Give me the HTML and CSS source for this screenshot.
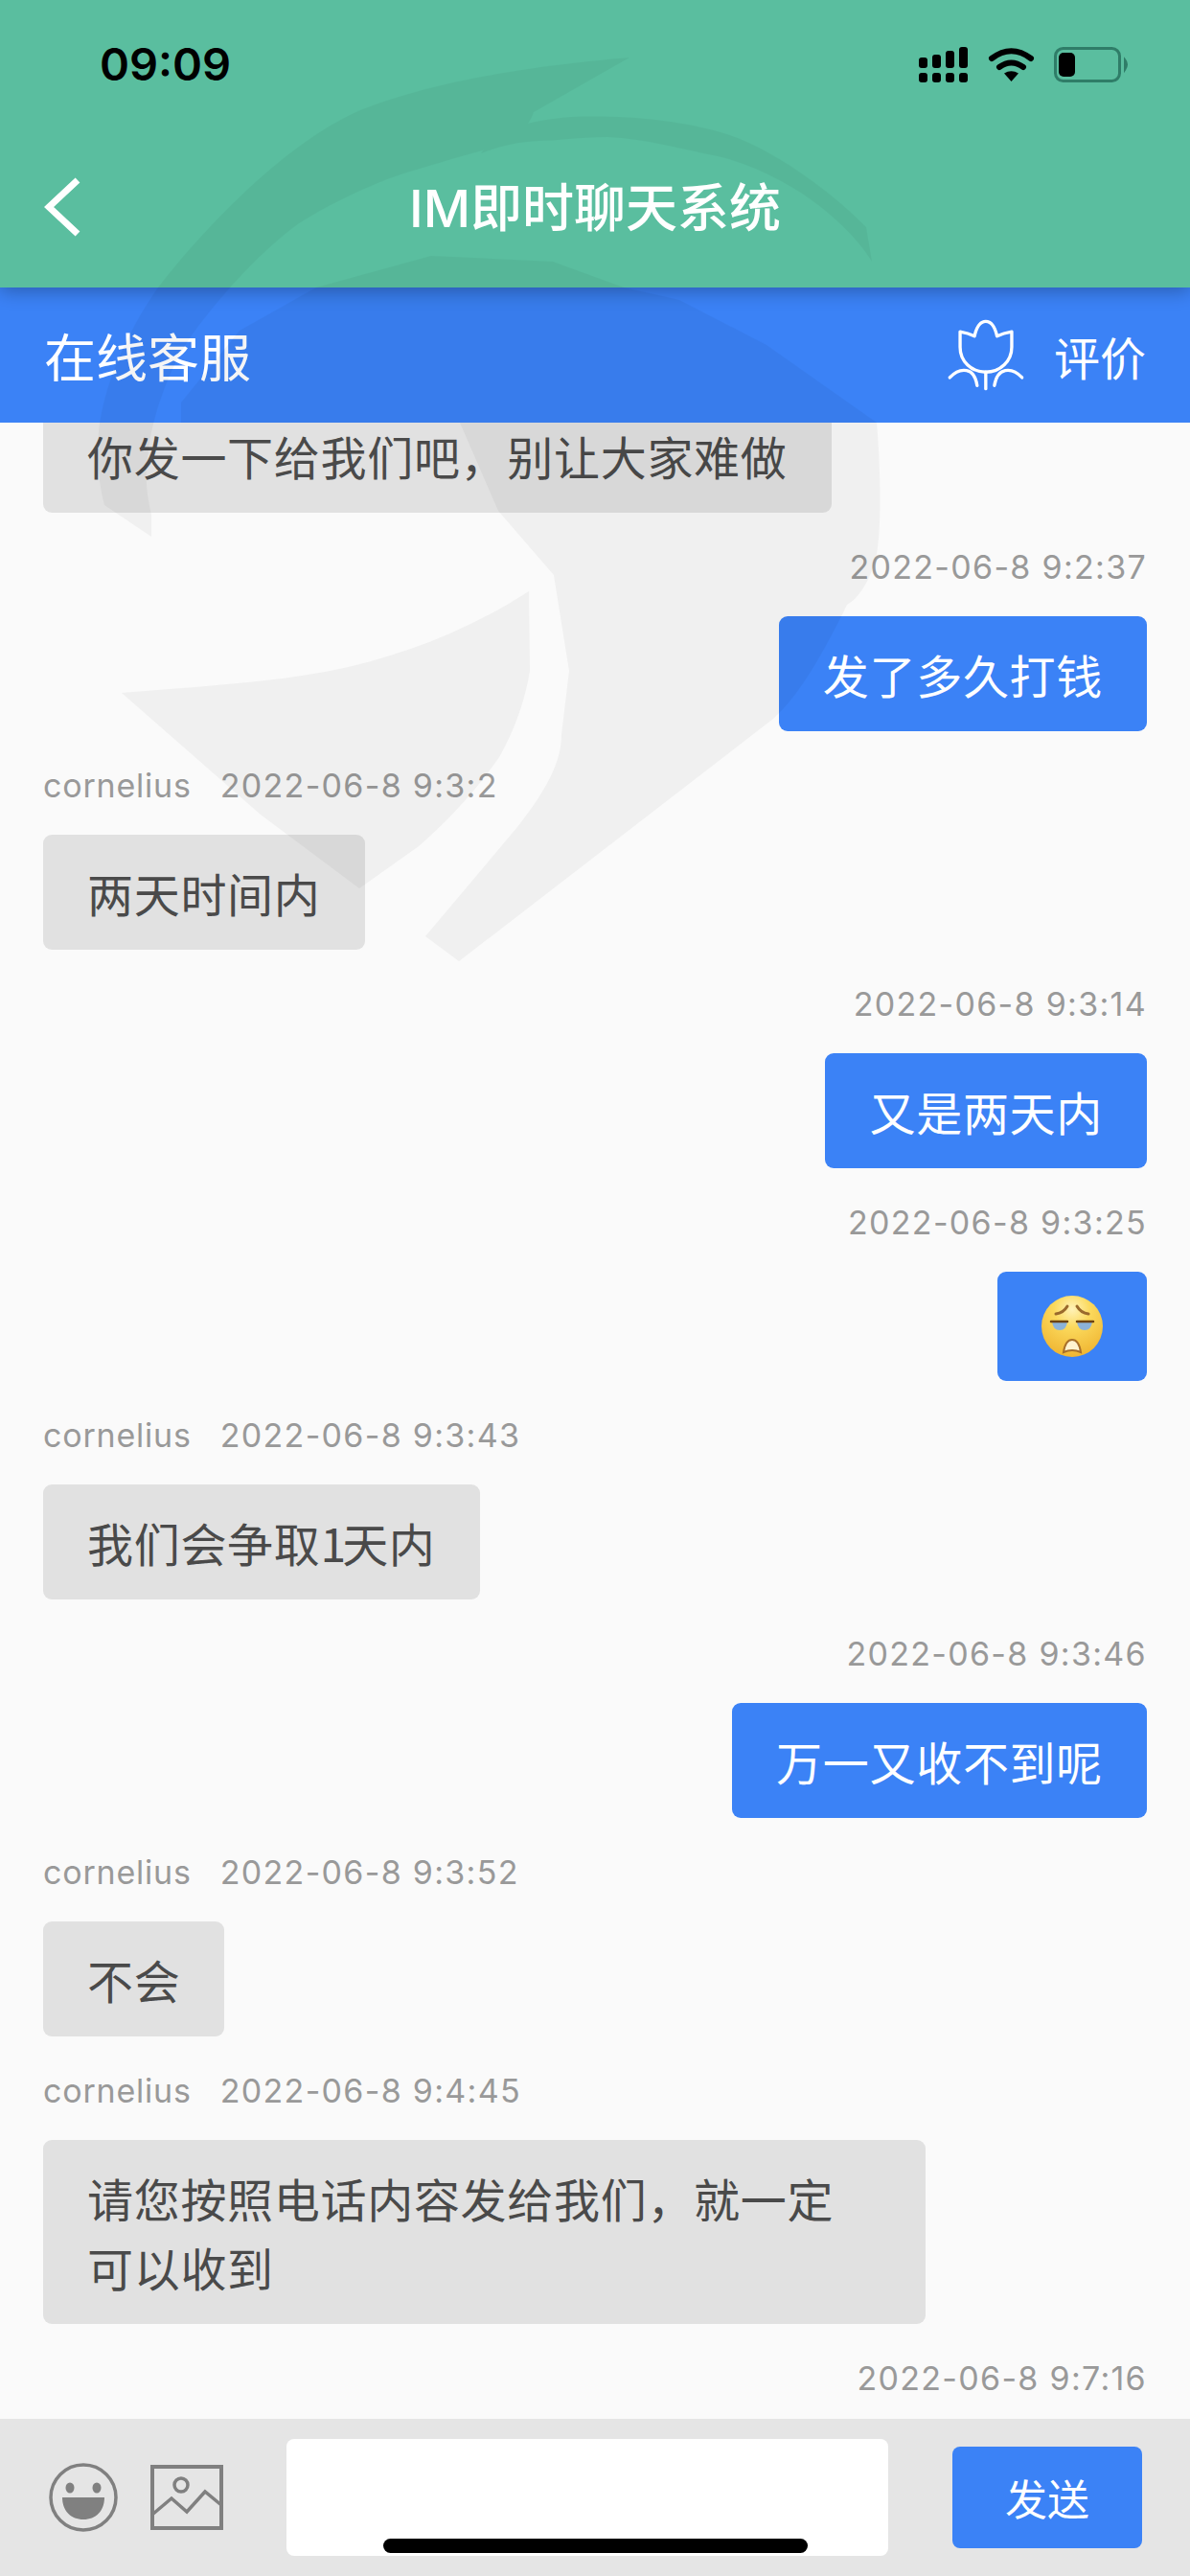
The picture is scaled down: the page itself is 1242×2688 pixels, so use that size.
FILE: index.html
```html
<!DOCTYPE html>
<html lang="zh-CN">
<head>
<meta charset="utf-8">
<title>IM即时聊天系统</title>
<link rel="stylesheet" href="styles.css">
</head>
<body>
<div class="app">
  <header class="top">
    <div class="status">
      <span class="clock">09:09</span>
      <svg class="status-icons" width="224" height="40" viewBox="955 47 224 40">
        <g fill="#000">
          <rect x="959" y="76" width="9" height="10" rx="3"/><rect x="973" y="76" width="9" height="10" rx="3"/><rect x="987" y="76" width="9" height="10" rx="3"/><rect x="1001" y="76" width="9" height="10" rx="3"/>
          <rect x="959" y="60" width="9" height="11" rx="3"/><rect x="973" y="57" width="9" height="14" rx="3"/><rect x="987" y="53" width="9" height="18" rx="3"/><rect x="1001" y="49" width="9" height="22" rx="3"/>
          <path d="M1055.500 85l-7.500-8.500q7.500-4.500 15 0z"/>
        </g>
        <g fill="none" stroke="#000" stroke-width="6" stroke-linecap="round">
          <path d="M1035 61q20.500-15.500 41 0"/>
          <path d="M1043 70q12.500-9 25 0"/>
        </g>
        <rect x="1101.500" y="50.500" width="67" height="34" rx="8" fill="none" stroke="#2f7d68" stroke-width="3"/>
        <rect x="1105" y="55" width="17" height="25" rx="5" fill="#000"/>
        <path d="M1174 62q4 5 0 11z" fill="#2f7d68" stroke="#2f7d68" stroke-width="2"/>
      </svg>
    </div>
    <div class="nav">
      <svg class="back" width="40" height="64" viewBox="0 0 40 64"><path d="M35 4 5 32l30 28" fill="none" stroke="#fff" stroke-width="7"/></svg>
      <h1 class="title">IM即时聊天系统</h1>
    </div>
  </header>

  <div class="subbar">
    <span class="subbar-title">在线客服</span>
    <div class="rate">
      <svg class="tulip" width="82" height="77" viewBox="85 100 245 230">
        <g fill="none" stroke="#fff" stroke-width="10" stroke-linecap="round" stroke-linejoin="round">
          <path d="M127 142q25 4 45 14q10-46 35-46t35 46q20-10 46-14v48c0 44-36 78-81 78s-80-34-80-78z"/>
          <path d="M207 268v52"/>
          <path d="M95 285q25-27 52-22t33 47"/>
          <path d="M320 285q-25-27-52-22t-34 47"/>
        </g>
      </svg>
      <span class="rate-text">评价</span>
    </div>
  </div>

  <main class="chat">
    <div class="bubble them first">你发一下给我们吧，别让大家难做</div>

    <div class="stamp right"><span class="time">2022-06-8 9:2:37</span></div>
    <div class="bubble me">发了多久打钱</div>

    <div class="stamp"><span class="name">cornelius</span><span class="time">2022-06-8 9:3:2</span></div>
    <div class="bubble them">两天时间内</div>

    <div class="stamp right"><span class="time">2022-06-8 9:3:14</span></div>
    <div class="bubble me">又是两天内</div>

    <div class="stamp right"><span class="time">2022-06-8 9:3:25</span></div>
    <div class="bubble me">
      <svg class="emoji" width="64" height="66" viewBox="0 0 64 66">
        <defs>
          <radialGradient id="face" cx="50%" cy="22%" r="85%">
            <stop offset="0" stop-color="#fff2b8"/>
            <stop offset=".35" stop-color="#fbd95c"/>
            <stop offset="1" stop-color="#eeb02c"/>
          </radialGradient>
        </defs>
        <circle cx="32" cy="33" r="32" fill="url(#face)"/>
        <g fill="none" stroke="#9a6a2c" stroke-width="3" stroke-linecap="round">
          <path d="M15 20q8-1 12-8"/>
          <path d="M49 20q-8-1-12-8"/>
        </g>
        <path d="M11 28h16q-1 9-8 9t-8-9z" fill="#8cb2d8"/>
        <path d="M37 28h16q-1 9-8 9t-8-9z" fill="#8cb2d8"/>
        <g fill="none" stroke="#6d4313" stroke-width="2.500" stroke-linecap="round">
          <path d="M10 28h17"/>
          <path d="M37 28h17"/>
        </g>
        <path d="M23 60q2-13 9-13t9 13q-9-4-18 0z" fill="#fff3d0" stroke="#a8702a" stroke-width="2"/>
      </svg>
    </div>

    <div class="stamp"><span class="name">cornelius</span><span class="time">2022-06-8 9:3:43</span></div>
    <div class="bubble them">我们会争取<span class="digit">1</span>天内</div>

    <div class="stamp right"><span class="time">2022-06-8 9:3:46</span></div>
    <div class="bubble me">万一又收不到呢</div>

    <div class="stamp"><span class="name">cornelius</span><span class="time">2022-06-8 9:3:52</span></div>
    <div class="bubble them">不会</div>

    <div class="stamp"><span class="name">cornelius</span><span class="time">2022-06-8 9:4:45</span></div>
    <div class="bubble them wide">请您按照电话内容发给我们，就一定<br>可以收到</div>

    <div class="stamp right"><span class="time">2022-06-8 9:7:16</span></div>
  </main>

  <footer class="composer">
    <svg class="tool" width="72" height="72" viewBox="0 0 72 72">
      <circle cx="36" cy="36" r="34" fill="none" stroke="#808080" stroke-width="3.500"/>
      <ellipse cx="22" cy="26" rx="4.500" ry="5.500" fill="#808080"/>
      <ellipse cx="50" cy="26" rx="4.500" ry="5.500" fill="#808080"/>
      <path d="M14 36h44c0 14-9 23-22 23s-22-9-22-23z" fill="#808080"/>
    </svg>
    <svg class="tool" width="76" height="68" viewBox="0 0 76 68">
      <rect x="2" y="2" width="72" height="64" fill="none" stroke="#808080" stroke-width="4"/>
      <circle cx="32" cy="21" r="7" fill="none" stroke="#808080" stroke-width="3.500"/>
      <path d="M3 51l19-16 16 14 19-21 17 14" fill="none" stroke="#808080" stroke-width="3.500"/>
    </svg>
    <div class="input"></div>
    <button class="send">发送</button>
  </footer>

  <svg class="watermark" width="1242" height="2688" viewBox="0 0 1242 2688">
    <path d="M657 60C590 66 470 78 376 115 300 148 215 235 165 300 130 350 108 405 103 450c-2 30 0 55 6 77l49 33v-23c-6-25-7-45-3-67 3-30 20-85 45-120 35-48 75-90 112-117 35-22 65-35 92-46 40-14 80-24 116-35 18-8 30-16 37-35z"/>
    <path d="M502 160c12-20 40-34 94-38 50-2 120 2 174 22 45 18 100 58 134 93l6 36c-12-20-32-40-52-56-30-24-70-45-109-54-40-8-75-18-115-20-30 0-55 4-72 4-20 1-40 5-60 13z"/>
    <path d="M330 300 450 267 577 273 651 300 709 313 800 360 915 441C920 500 920 570 912 590 905 610 895 625 884 631 860 680 835 725 807 750L479 1003 444 977 540 863C570 825 586 795 586 767L594 700 578 600 520 533 480 441H189V420L250 345Z"/>
    <path d="M127 723c70-6 150-10 218-23 70-14 140-40 207-83l1 83c-5 30-15 60-32 90-24 35-52 65-84 93l-62 44-103-77z"/>
  </svg>

  <div class="home-bar"></div>
</div>
</body>
</html>
```

FILE: styles.css
```css
* { box-sizing: border-box; }
html, body { margin: 0; padding: 0; }
body { width: 1242px; height: 2688px; overflow: hidden; font-family: "Noto Sans CJK SC", "Noto Sans", sans-serif; }

.app { position: relative; width: 1242px; height: 2688px; display: flex; flex-direction: column; background: #fafafa; overflow: hidden; }

.top { position: relative; z-index: 2; flex: none; height: 300px; background: #5abe9f; box-shadow: 0 4px 18px rgba(0, 0, 0, .28); }
.status { height: 132px; padding: 47px 63px 0 104px; display: flex; justify-content: space-between; align-items: flex-start; }
.clock { font-family: Inter, "Liberation Sans", sans-serif; font-weight: 600; font-size: 47px; line-height: 40px; color: #000; }
.status-icons { display: block; }
.nav { height: 168px; display: flex; align-items: center; justify-content: center; position: relative; }
.back { position: absolute; left: 46px; top: 52px; }
.title { margin: 4px 0 0; font-family: Inter, "Noto Sans CJK SC", sans-serif; font-weight: 500; font-size: 54px; line-height: 64px; color: #fff; }

.subbar { flex: none; height: 141px; background: #3b82f6; color: #fff; padding: 0 46px; display: flex; align-items: center; justify-content: space-between; }
.subbar-title { font-size: 54px; line-height: 70px; font-weight: 400; }
.rate { display: flex; align-items: center; gap: 30px; }
.tulip { display: block; }
.rate-text { font-size: 48px; line-height: 60px; }

.chat { flex: 1; min-height: 0; overflow: hidden; padding: 0 45px; display: flex; flex-direction: column; align-items: flex-start; }

.bubble { flex: none; padding: 24px 46px; border-radius: 9px; font-size: 48px; line-height: 72px; letter-spacing: .7px; }
.them { background: #e1e1e1; color: #4a4a4a; }
.me { background: #3b82f6; color: #fff; align-self: flex-end; }
.first { margin-top: -26px; }
.wide { width: 921px; }
.emoji { display: block; }
.digit { letter-spacing: -4px; }

.stamp { flex: none; align-self: stretch; margin: 39px 0 33px; height: 36px; display: flex; gap: 30px; font-family: Inter, "Noto Sans", sans-serif; font-size: 34px; line-height: 36px; color: #999; }
.right { justify-content: flex-end; }
.name { letter-spacing: .8px; }
.time { letter-spacing: 1.300px; }

.composer { flex: none; height: 164px; background: #e5e5e5; padding: 0 50px 0 51px; display: flex; align-items: center; position: relative; }
.tool { display: block; flex: none; }
.tool + .tool { margin-left: 34px; }
.input { width: 628px; height: 122px; margin-left: 66px; background: #fff; border-radius: 8px; }
.send { width: 198px; height: 106px; margin-left: 67px; border: 0; border-radius: 8px; background: #3b82f6; color: #fff; font-family: inherit; font-size: 44px; padding: 0; }

.watermark { position: absolute; left: 0; top: 0; z-index: 5; pointer-events: none; fill: #000; opacity: .035; }
.home-bar { position: absolute; z-index: 6; left: 400px; top: 2649px; width: 443px; height: 15px; border-radius: 8px; background: #000; }
```
